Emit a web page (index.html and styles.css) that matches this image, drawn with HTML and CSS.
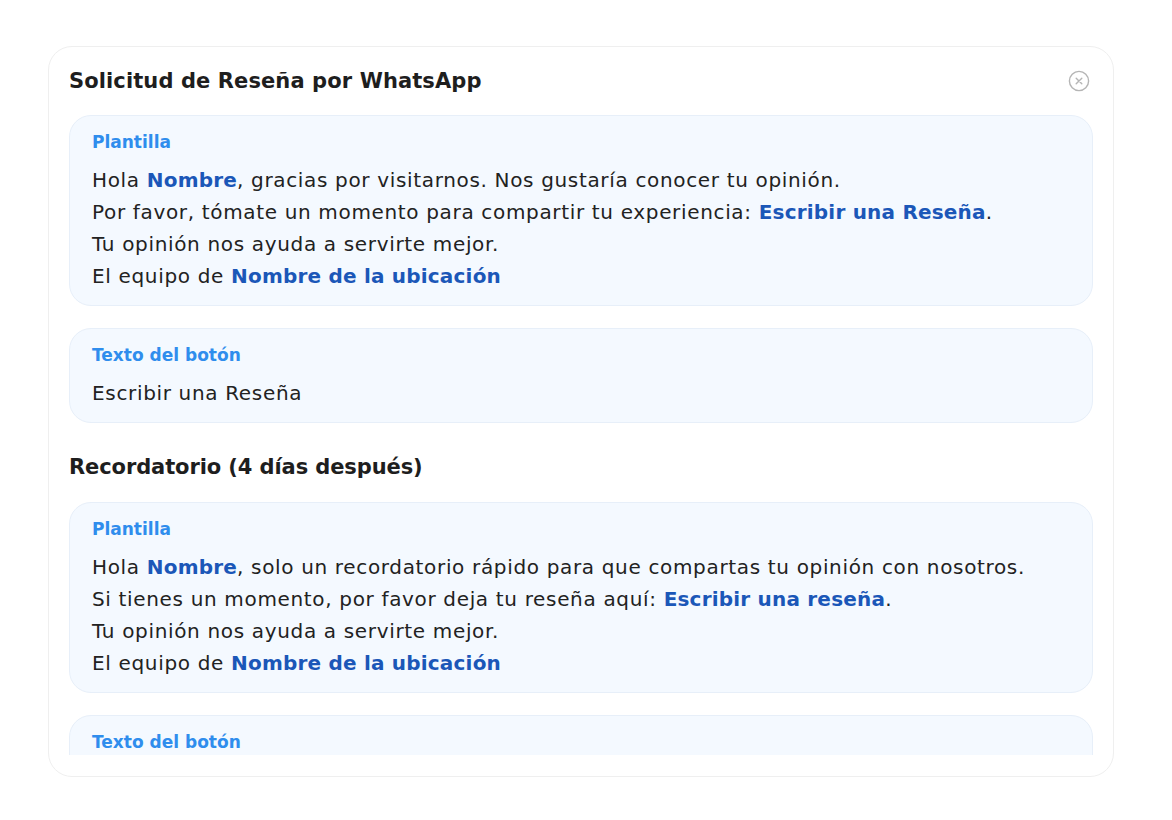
FILE: index.html
```html
<!DOCTYPE html>
<html lang="es">
<head>
<meta charset="utf-8">
<title>Solicitud de Reseña por WhatsApp</title>
<link rel="stylesheet" href="styles.css">
</head>
<body>
<div class="modal">
  <div class="modal-header">
    <h2 class="modal-title">Solicitud de Reseña por WhatsApp</h2>
    <button class="close-btn" aria-label="Cerrar">
      <svg width="22" height="22" viewBox="0 0 22 22" fill="none" stroke="#b5b5b5" stroke-width="1.4" stroke-linecap="round">
        <circle cx="11" cy="11" r="9.6"/>
        <path d="M8.2 8.2 L13.8 13.8 M13.8 8.2 L8.2 13.8"/>
      </svg>
    </button>
  </div>
  <div class="modal-body">
    <div class="field">
      <div class="field-label">Plantilla</div>
      <div class="field-text">
        <p>Hola <b>Nombre</b>, gracias por visitarnos. Nos gustaría conocer tu opinión.</p>
        <p>Por favor, tómate un momento para compartir tu experiencia: <b>Escribir una Reseña</b>.</p>
        <p>Tu opinión nos ayuda a servirte mejor.</p>
        <p>El equipo de <b>Nombre de la ubicación</b></p>
      </div>
    </div>
    <div class="field">
      <div class="field-label">Texto del botón</div>
      <div class="field-text">
        <p>Escribir una Reseña</p>
      </div>
    </div>
    <h3 class="section-title">Recordatorio (4 días después)</h3>
    <div class="field">
      <div class="field-label">Plantilla</div>
      <div class="field-text">
        <p>Hola <b>Nombre</b>, solo un recordatorio rápido para que compartas tu opinión con nosotros.</p>
        <p>Si tienes un momento, por favor deja tu reseña aquí: <b>Escribir una reseña</b>.</p>
        <p>Tu opinión nos ayuda a servirte mejor.</p>
        <p>El equipo de <b>Nombre de la ubicación</b></p>
      </div>
    </div>
    <div class="field">
      <div class="field-label">Texto del botón</div>
      <div class="field-text">
        <p>Escribir una Reseña</p>
      </div>
    </div>
  </div>
</div>
</body>
</html>
```
FILE: styles.css
```css
html, body {
  margin: 0;
  padding: 0;
  background: #ffffff;
}
body {
  font-family: "DejaVu Sans", "Noto Sans", sans-serif;
  color: #222222;
}
.modal {
  box-sizing: border-box;
  margin: 46px 0 0 48px;
  width: 1066px;
  height: 731px;
  border: 1px solid #efefef;
  border-radius: 24px;
  padding: 0 20px 21px;
  display: flex;
  flex-direction: column;
  background: #fff;
}
.modal-header {
  display: flex;
  align-items: center;
  justify-content: space-between;
  padding-top: 19px;
  margin-bottom: 19px;
}
.modal-title {
  margin: 0;
  font-size: 21px;
  line-height: 30px;
  font-weight: 600;
  color: #1e1e1e;
  letter-spacing: 0.1px;
}
.close-btn {
  border: 0;
  background: none;
  padding: 0;
  margin-right: 3px;
  width: 22px;
  height: 22px;
  display: flex;
}
.modal-body {
  flex: 1;
  overflow: hidden;
  display: flex;
  flex-direction: column;
  gap: 22px;
}
.field {
  flex-shrink: 0;
  background: #f4f9ff;
  border: 1px solid #e7eff9;
  border-radius: 22px;
  padding: 14px 22px 13px;
}
.field-label {
  font-size: 17px;
  line-height: 24px;
  font-weight: 600;
  color: #2f8ded;
  margin-bottom: 10px;
}
.field-text p {
  margin: 0;
  font-size: 20px;
  line-height: 32px;
  letter-spacing: 0.66px;
}
.field-text b {
  font-weight: 600;
  color: #1b57b8;
  letter-spacing: 0.2px;
}
.section-title {
  margin: 7px 0 -2px;
  font-size: 21px;
  line-height: 30px;
  font-weight: 600;
  color: #1e1e1e;
  letter-spacing: -0.1px;
}
```
